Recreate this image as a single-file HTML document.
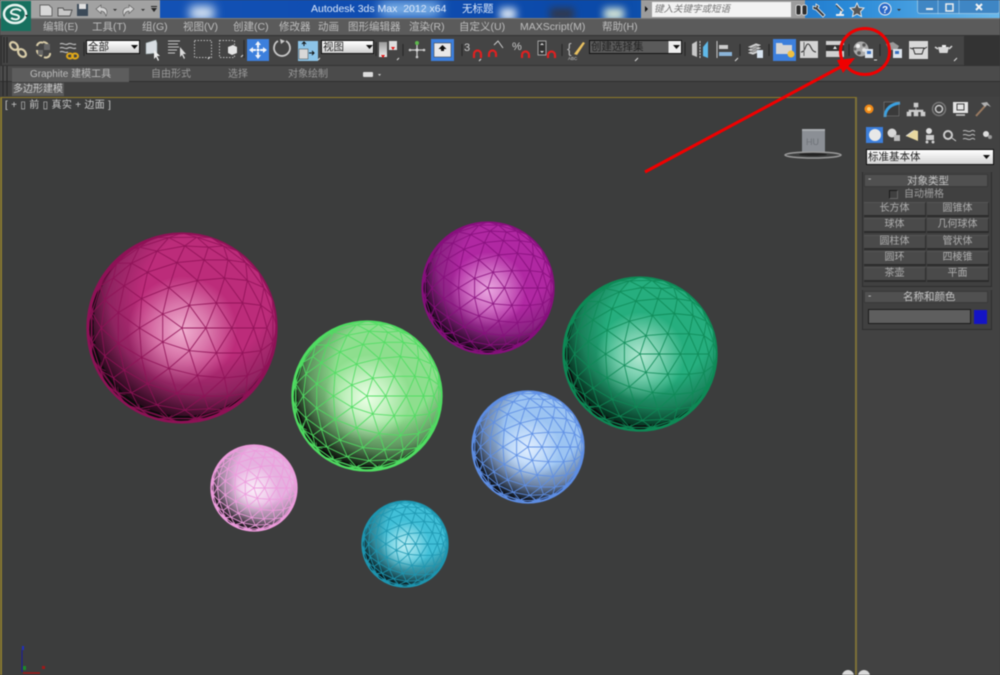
<!DOCTYPE html>
<html><head><meta charset="utf-8">
<style>
html,body{margin:0;padding:0;background:#3c3c3c}
#p{position:relative;width:1000px;height:675px;overflow:hidden;background:#3b3c3c;font-family:"Liberation Sans","Noto Sans CJK SC",sans-serif;filter:blur(.5px)}
#p div,#p span.t{position:absolute;box-sizing:border-box}
.t{position:absolute;white-space:nowrap;font-size:10px;line-height:12px;color:#c4c4c4}
.m{top:21px;font-size:10.5px;color:#bdbdbd}
.b{background:#4a4a4a;border-top:1px solid #555;border-bottom:2px solid #2c2c2c;border-right:1px solid #2f2f2f;color:#b0b0b0;font-size:10px;line-height:11px;text-align:center;height:15px}
svg{position:absolute;left:0;top:0}
</style></head><body>
<div id="p">
<!-- title bar -->
<div style="left:0;top:0;width:1000px;height:19px;background:linear-gradient(90deg,#1656b8,#0f4cb0 40%,#0b4aa8 62%,#2a8ad8 85%,#6ab8ea)"></div>
<div style="left:190px;top:6px;width:24px;height:14px;background:#dce8f4;filter:blur(5px)"></div>
<div style="left:380px;top:2px;width:60px;height:14px;background:#8cc0f0;filter:blur(6px)"></div>
<div style="left:500px;top:8px;width:16px;height:12px;background:#dce8f4;filter:blur(4px)"></div>
<div style="left:550px;top:8px;width:24px;height:12px;background:#30384c;filter:blur(4px)"></div>
<div style="left:604px;top:8px;width:20px;height:12px;background:#d8e8d8;filter:blur(4px)"></div>
<div style="left:0;top:0;width:160px;height:19px;background:#a2a2a2"></div>
<div style="left:641px;top:0;width:164px;height:19px;background:#9c9c9c"></div>
<div style="left:652px;top:2px;width:139px;height:15px;background:#f2f2f2"></div>
<div style="left:917px;top:0;width:83px;height:14px;background:#3f86c4;border:1px solid #8cc0e4;border-top:none;border-radius:0 0 3px 3px"></div>
<div style="left:0;top:18px;width:1000px;height:1px;background:#7b7b7b"></div>
<span class="t" style="left:311px;top:3px;font-size:10.500px;color:#dce8fa">Autodesk 3ds Max&nbsp; 2012 x64</span>
<span class="t" style="left:462px;top:3px;font-size:10.500px;color:#dce8fa">无标题</span>
<span class="t" style="left:654px;top:4px;font-size:9.500px;color:#777;font-style:italic">键入关键字或短语</span>
<!-- menu -->
<div style="left:0;top:19px;width:1000px;height:16px;background:#5b5b5b"></div>
<span class="t m" style="left:43px">编辑(E)</span><span class="t m" style="left:92px">工具(T)</span><span class="t m" style="left:142px">组(G)</span><span class="t m" style="left:183px">视图(V)</span><span class="t m" style="left:233px">创建(C)</span><span class="t m" style="left:279px">修改器</span><span class="t m" style="left:318px">动画</span><span class="t m" style="left:348px">图形编辑器</span><span class="t m" style="left:409px">渲染(R)</span><span class="t m" style="left:459px">自定义(U)</span><span class="t m" style="left:520px">MAXScript(M)</span><span class="t m" style="left:602px">帮助(H)</span>
<!-- toolbar -->
<div style="left:0;top:35px;width:1000px;height:31px;background:#333"></div>
<div style="left:2px;top:36px;width:962px;height:29px;background:#444"></div>
<!-- ribbon -->
<div style="left:0;top:66px;width:1000px;height:16px;background:#4b4b4b;border-bottom:1px solid #2e2e2e"></div>
<div style="left:12px;top:68px;width:117px;height:15px;background:#5d5d5d"></div>
<span class="t" style="left:30px;top:69px;font-size:10px;color:#bbb">Graphite 建模工具</span>
<span class="t" style="left:151px;top:69px;font-size:10px;color:#9a9a9a">自由形式</span>
<span class="t" style="left:228px;top:69px;font-size:10px;color:#9a9a9a">选择</span>
<span class="t" style="left:288px;top:69px;font-size:10px;color:#9a9a9a">对象绘制</span>
<div style="left:0;top:82px;width:1000px;height:15px;background:#3f3f3f"></div>
<div style="left:12px;top:83px;width:52px;height:13px;background:#5a5a5a"></div>
<span class="t" style="left:13px;top:84px;font-size:10px;color:#ccc">多边形建模</span>
<!-- viewport -->
<div style="left:0;top:97px;width:857px;height:578px;background:#3c3d3d;border-top:1px solid #8f7a2a;border-left:2px solid #8a7a30;border-right:2px solid #7d7038"></div>
<span class="t" style="left:5px;top:100px;font-size:10px;color:#c8c8c8;letter-spacing:.3px">[ + ▯ 前 ▯ 真实 + 边面 ]</span>
<!-- right panel -->
<div style="left:857px;top:97px;width:143px;height:578px;background:#424242"></div>
<div style="left:866px;top:149px;width:128px;height:16px;background:linear-gradient(#fff,#d4d4d4);border:1px solid #111"></div>
<span class="t" style="left:868px;top:151px;font-size:10.500px;color:#222">标准基本体</span>
<div style="left:862px;top:172px;width:130px;height:115px;background:#404040;border:1px solid #2e2e2e;border-top:none"></div>
<div style="left:864px;top:174px;width:124px;height:13px;background:#505050;border:1px solid #3a3a3a"></div>
<span class="t" style="left:907px;top:175px;font-size:10.500px;color:#c4c4c4">对象类型</span>
<span class="t" style="left:868px;top:174px;color:#ccc">-</span>
<div style="left:889px;top:190px;width:9px;height:9px;border:1px solid #1a1a1a;border-right-color:#666;border-bottom-color:#666"></div>
<span class="t" style="left:904px;top:189px;font-size:10px;color:#9f9f9f">自动栅格</span>
<div class="b" style="left:864px;top:202px;width:62px">长方体</div><div class="b" style="left:927px;top:202px;width:62px">圆锥体</div>
<div class="b" style="left:864px;top:218px;width:62px">球体</div><div class="b" style="left:927px;top:218px;width:62px">几何球体</div>
<div class="b" style="left:864px;top:235px;width:62px">圆柱体</div><div class="b" style="left:927px;top:235px;width:62px">管状体</div>
<div class="b" style="left:864px;top:251px;width:62px">圆环</div><div class="b" style="left:927px;top:251px;width:62px">四棱锥</div>
<div class="b" style="left:864px;top:267px;width:62px">茶壶</div><div class="b" style="left:927px;top:267px;width:62px">平面</div>
<div style="left:862px;top:290px;width:130px;height:40px;background:#404040;border:1px solid #2e2e2e;border-top:none"></div>
<div style="left:864px;top:291px;width:124px;height:12px;background:#505050;border:1px solid #3a3a3a"></div>
<span class="t" style="left:903px;top:291px;font-size:10.500px;color:#c4c4c4">名称和颜色</span>
<span class="t" style="left:868px;top:291px;color:#ccc">-</span>
<div style="left:868px;top:309px;width:103px;height:15px;background:#5e5e5e;border:1px solid #1c1c1c"></div>
<div style="left:974px;top:310px;width:13px;height:14px;background:#1414c4"></div>
<!-- dropdowns -->
<div style="left:86px;top:40px;width:54px;height:14px;background:linear-gradient(#fff,#d0d0d0);border:1px solid #111"></div>
<span class="t" style="left:88px;top:41px;font-size:10.500px;color:#222">全部</span>
<div style="left:321px;top:40px;width:53px;height:14px;background:linear-gradient(#fff,#d0d0d0);border:1px solid #111"></div>
<span class="t" style="left:323px;top:41px;font-size:10.500px;color:#222">视图</span>
<div style="left:589px;top:40px;width:93px;height:14px;background:linear-gradient(90deg,#5a5a5a 86%,#eee 86%);border:1px solid #111"></div>
<span class="t" style="left:591px;top:41px;font-size:10.500px;color:#222">创建选择集</span>

<svg width="1000" height="675" viewBox="0 0 1000 675" fill="none">
<defs><linearGradient id="gg" x1="0" y1="0" x2="0" y2="1"><stop offset="0" stop-color="#999"/><stop offset="1" stop-color="#eee"/></linearGradient></defs>
<!-- app logo -->
<rect x="1" y="1" width="30" height="30" fill="#17705f"/>
<ellipse cx="15" cy="14" rx="11" ry="9" fill="none" stroke="#e8f4f0" stroke-width="2.500"/>
<path d="M21 11c-4-3-9-2-10 1s8 2 8 5-5 3-8 1" stroke="#e8f4f0" stroke-width="2"/>
<path d="M25 15l3 0-1.500 2z" fill="#111"/>
<!-- quick access -->
<path d="M40 5h9l3 3v8H40z" fill="#d8d8d8" stroke="#666"/>
<path d="M58 8h5l1 2h8l-2 6H58z" fill="#c8c8c8" stroke="#555"/>
<rect x="77" y="4" width="11" height="12" fill="#3c4a58"/><rect x="79" y="4" width="7" height="5" fill="#e0e0e0"/>
<path d="M96 9l5-4v2.500c6 0 7 4 5 8.500-1-3-2-5-5-5v2.500z" fill="#d4d4d4" stroke="#555" stroke-width=".6"/>
<path d="M134 9l-5-4v2.500c-6 0-7 4-5 8.500 1-3 2-5 5-5v2.500z" fill="#d4d4d4" stroke="#555" stroke-width=".6"/>
<path d="M113 9h4l-2 2zM141 9h4l-2 2z" fill="#333"/><path d="M151 6h6v1h-6zM151 8h6l-3 4z" fill="#222"/>
<!-- search row -->
<path d="M645 6l3 3-3 3z" fill="#111"/>
<rect x="796" y="5" width="5" height="10" rx="2" fill="#2c2c2c" stroke="#eee" stroke-width=".8"/><rect x="802" y="5" width="5" height="10" rx="2" fill="#2c2c2c" stroke="#eee" stroke-width=".8"/>
<path d="M816 4l3 2-1 2 7 7-2 2-7-7-3-1 0-3 3 1z" fill="#3a3a3a" stroke="#eee" stroke-width=".8"/>
<path d="M836 4l7 7M836 15h8M840 15l2-6" stroke="#eee" stroke-width="2"/><path d="M836 5l6 6" stroke="#333"/>
<path d="M857 3l2 4.500 5 .5-3.500 3.500 1 5-4.500-2.500-4.500 2.500 1-5-3.500-3.500 5-.5z" fill="#555" stroke="#eee" stroke-width=".9"/>
<circle cx="885" cy="9" r="6" fill="#2a68c8" stroke="#eee"/><text x="882" y="13" font-size="10" font-weight="bold" fill="#fff" font-family="Liberation Sans">?</text>
<path d="M897 9h4l-2 2z" fill="#333"/>
<path d="M926 8h7v2h-7z" fill="#eee"/><rect x="946" y="4" width="7" height="7" stroke="#eee" stroke-width="1.500"/>
<path d="M976 4l6 6M982 4l-6 6" stroke="#f4f4f4" stroke-width="2"/>
<path d="M938 0v14M959 0v14" stroke="#a0d0f0" stroke-width=".6"/>
<!-- toolbar separators -->
<path d="M4 37v26M7 37v26M3 66v30M7 66v30M84 42v14M244 40v18M376 42v14M403 44v12M462 44v12M562 44v12M685 42v14M740 44v12M769 44v12M849 44v12M880 44v12" stroke="#262626"/>
<!-- link icons -->
<ellipse cx="14" cy="46" rx="4.500" ry="3.200" transform="rotate(45 14 46)" stroke="#d8cca8" stroke-width="2.200"/>
<ellipse cx="22" cy="53" rx="4.500" ry="3.200" transform="rotate(45 22 53)" stroke="#d8cca8" stroke-width="2.200"/>
<path d="M37 46a4 4 0 0 1 6-3M50 53a4 4 0 0 1-6 4M37 50c0 4 3 5 5 6M43 42c3 0 5 2 6 5" stroke="#d8cca8" stroke-width="2"/>
<rect x="44" y="44" width="6" height="6" fill="#666"/><rect x="38" y="50" width="5" height="5" fill="#666"/>
<path d="M60 44c3-2 5 2 8 0s5 2 8 0M60 48c3-2 5 2 8 0s5 2 8 0M60 52c3-2 5 2 8 0" stroke="#bbb" stroke-width="1.200"/>
<ellipse cx="70" cy="56" rx="3" ry="2.500" stroke="#e0a818" stroke-width="2"/><ellipse cx="75" cy="56" rx="3" ry="2.500" stroke="#e0a818" stroke-width="2"/>
<path d="M131 45h7l-3.500 4z" fill="#111"/><path d="M366 45h7l-3.500 4z" fill="#111"/><path d="M673 45h7l-3.500 4z" fill="#111"/><path d="M983 155h7l-3.500 4z" fill="#111"/>
<!-- select -->
<path d="M146 43l10-3 1 3v10l-11 1z" fill="#d8dde2" stroke="#9aa" stroke-width=".5"/>
<path d="M154 50l0 9 2-2 2 4 1-1-2-4 3 0z" fill="#eee"/>
<path d="M168 41h12M168 44h10M168 47h11M168 50h9M168 53h7" stroke="#c8c8c8" stroke-width="1"/>
<path d="M180 47l0 10 2-2 2 4 1-1-2-4 3 0z" fill="#d8d8d8"/>
<rect x="194.500" y="40.500" width="17" height="17" stroke="#bbb" stroke-dasharray="1.500 1.500"/>
<rect x="219.500" y="40.500" width="15" height="17" stroke="#bbb" stroke-dasharray="1.500 1.500"/>
<path d="M228 47l5-2 4 2v6l-5 2-4-2z" fill="#e4e4e4"/>
<!-- move -->
<rect x="247" y="39" width="22" height="22" fill="#3c7fdc"/>
<path d="M258 41l3 4h-2v3h-2v-3h-2zM258 59l3-4h-2v-3h-2v3h-2zM249 50l4-3v2h3v2h-3v2zM267 50l-4-3v2h-3v2h3v2z" fill="#f0f4fa"/><circle cx="258" cy="50" r="1.500" fill="#fff"/>
<!-- rotate -->
<path d="M278 41a8 8 0 1 0 8 0" stroke="#c8c8c8" stroke-width="1.800"/><path d="M280 39l5 2-4 3z" fill="#c8c8c8"/>
<!-- scale -->
<rect x="298" y="41" width="20" height="20" fill="#8cc4e8"/><rect x="299" y="49" width="9" height="10" fill="#d8d8d8" stroke="#444" stroke-width=".5"/>
<path d="M304 46v-4M302 44l2-2 2 2M309 53h5M312 51l2 2-2 2" stroke="#111"/>
<!-- mirror pair -->
<rect x="379" y="42" width="8" height="15" fill="url(#gg)"/><rect x="389" y="41" width="8" height="9" fill="#ddd"/>
<path d="M381 55l2 3 2-3zM391 47l2 3 2-3z" fill="#e01010"/>
<!-- crosshair -->
<path d="M417 44v14M410 50h14" stroke="#ccc" stroke-width="1.300"/><circle cx="417" cy="43" r="2" fill="#5cb84c"/><circle cx="417" cy="50" r="1.500" fill="#ddd"/><circle cx="410" cy="50" r="1.300" fill="#ccc"/><circle cx="424" cy="50" r="1.300" fill="#ccc"/><circle cx="417" cy="57" r="1.300" fill="#ccc"/>
<!-- active -->
<rect x="431" y="39" width="23" height="22" fill="#3c7fdc"/><rect x="434" y="43" width="17" height="14" fill="#e8e8e8" stroke="#333" stroke-width=".5"/><path d="M442.500 45l4 4h-2.500v2h-3v-2h-2.500z" fill="#111"/>
<!-- snaps -->
<text x="464" y="51" font-size="11" fill="#ccc" font-family="Liberation Sans">3</text>
<path d="M474 58v-4a3.500 3.500 0 0 1 7 0v4" stroke="#e02020" stroke-width="2.200"/>
<path d="M489 57v-3a3.500 3.500 0 0 1 7 0v3" stroke="#e02020" stroke-width="2.200"/><path d="M494 45l4-4 5 7" stroke="#ccc"/>
<text x="512" y="50" font-size="11" fill="#ccc" font-family="Liberation Sans">%</text>
<path d="M522 58v-3a3.500 3.500 0 0 1 7 0v3M548 58v-3a3.500 3.500 0 0 1 7 0v3" stroke="#e02020" stroke-width="2.200"/>
<rect x="538" y="41" width="8" height="14" fill="#333" stroke="#bbb" stroke-width=".8"/><path d="M542 43l2 2h-4zM542 53l2-2h-4z" fill="#ddd"/>
<text x="567" y="53" font-size="14" fill="#bbb" font-family="Liberation Sans">{</text>
<path d="M574 54l9-12 2 1-8 12z" fill="#e8c060"/><text x="568" y="60" font-size="4.500" fill="#ccc" font-family="Liberation Sans">ABC</text>
<!-- mirror -->
<path d="M692 44l5-3v16l-5-2z" fill="#c8c8c8"/><path d="M700 41v17" stroke="#ccc" stroke-dasharray="2 1"/><path d="M708 41v17l-5-2v-9z" fill="#5fb8e8"/>
<path d="M717 41v17" stroke="#ccc"/><rect x="719" y="45" width="9" height="4" fill="#ccc"/><rect x="719" y="52" width="13" height="4" fill="#8bb4d8"/>
<path d="M747 47l9-4 6 2-9 4zM747 50l9-4 6 2-9 4zM747 53l9-4 6 2-9 4z" fill="#ccc" stroke="#333" stroke-width=".5"/><rect x="757" y="50" width="6" height="8" fill="#d8e4f0"/>
<!-- folder active -->
<rect x="773" y="39" width="23" height="22" fill="#3c7fdc"/><path d="M776 43h6l1 2h9v9h-16z" fill="#d4d4d4"/><circle cx="791" cy="54" r="3.500" fill="#f0c040"/>
<rect x="800" y="41" width="18" height="17" fill="#d4d4d4"/><path d="M801 52c5 0 4-8 7-8s3 8 8 8" stroke="#333" fill="none"/><path d="M804 42v14" stroke="#666"/>
<rect x="826" y="41" width="18" height="16" fill="#d0d0d0"/><rect x="826" y="45" width="18" height="6" fill="#333"/><path d="M835 46l2 3h-4z" fill="#eee"/>
<!-- material -->
<circle cx="861" cy="49" r="7.500" fill="#aaa"/><circle cx="858" cy="46" r="2" fill="#eee"/><circle cx="864" cy="45" r="1.700" fill="#555"/><circle cx="859" cy="53" r="1.900" fill="#555"/><circle cx="864" cy="50" r="1.900" fill="#e4e4e4"/><circle cx="855" cy="49" r="1.500" fill="#666"/>
<rect x="865" y="49" width="8" height="9" fill="#dde4ec"/><rect x="867" y="51" width="4" height="3" fill="#3a70c0"/>
<path d="M886 44l7-2 6 4-2 4h-8z" fill="#999"/><rect x="893" y="49" width="9" height="9" fill="#dde4ec"/><rect x="895" y="51" width="4" height="3" fill="#3a70c0"/>
<rect x="909" y="41" width="19" height="18" fill="#d8d8d8"/><path d="M913 48h11l-2 6h-7z" stroke="#333" fill="none"/><path d="M913 49l-3-1M924 49l3-2" stroke="#333"/>
<path d="M938 47h11l-1.500 6h-8z" fill="#d8d8d8"/><path d="M938 49l-3-2M949 49l3-3" stroke="#d8d8d8" stroke-width="1.500"/><path d="M942 46h4" stroke="#eee" stroke-width="2"/>
<path d="M635 61l3-3M735 61l3-3M877 60l-3 0M954 61l3-3M208 59l2-2M241 57l2-2M318 60l2-2M397 60l2-2M479 61l2-2" stroke="#ddd"/>
<!-- ribbon small -->
<rect x="363" y="72" width="10" height="5" rx="1" fill="#ddd"/><path d="M378 74h3l-1.500 2z" fill="#ccc"/>
<!-- cmd panel tabs -->
<circle cx="869" cy="109" r="4.500" fill="#f08818"/><circle cx="869" cy="109" r="2" fill="#ffd070"/>
<rect x="884" y="102" width="16" height="15" fill="#3a3a3a"/><path d="M885 117c0-8 6-13 15-14" stroke="#3aa0e0" stroke-width="3"/><rect x="884" y="102" width="15" height="14" stroke="#888" stroke-width=".5"/>
<path d="M914 103h4v4h-4zM907 112h4v4h-4zM914 112h4v4h-4zM921 112h4v4h-4zM916 107v3M909 112v-2h14v2" fill="#ccc" stroke="#ccc" stroke-width=".6"/>
<circle cx="939" cy="109" r="6.500" stroke="#777" stroke-width="1.500"/><circle cx="939" cy="109" r="3.500" stroke="#ccc" stroke-width="1.500"/>
<rect x="953" y="102" width="15" height="11" fill="#e4e4e4"/><rect x="957" y="104" width="7" height="6" stroke="#444"/><path d="M956 115h9" stroke="#ccc" stroke-width="1.500"/>
<path d="M976 116l10-11" stroke="#9a7a60" stroke-width="2"/><path d="M981 103l6-1 4 5-4-2-2 2z" fill="#b0b0b0"/>
<!-- second row -->
<rect x="866" y="127" width="17" height="16" fill="#3c7fdc"/><circle cx="875" cy="135" r="6" fill="#e8e8e8"/>
<circle cx="892" cy="133" r="4.500" fill="#d8d8d8"/><rect x="894" y="135" width="6" height="6" fill="#bbb"/>
<path d="M906 136l8-6 4 1 0 10z" fill="#e8d8a0"/><path d="M906 136l7-5" stroke="#ddd"/>
<circle cx="929" cy="131" r="3" fill="#ddd"/><rect x="926" y="135" width="8" height="5" fill="#ccc"/><circle cx="927" cy="142" r="1.500" fill="#ccc"/><circle cx="933" cy="142" r="1.500" fill="#ccc"/>
<circle cx="948" cy="135" r="4" stroke="#ccc" stroke-width="2"/><path d="M952 138l4 3" stroke="#ccc"/>
<path d="M963 131c3-2 5 2 8 0s3 1 4 0M963 135c3-2 5 2 8 0s3 1 4 0M963 139c3-2 5 2 8 0s3 1 4 0" stroke="#bbb"/>
<circle cx="986" cy="134" r="3" fill="#ddd"/><circle cx="990" cy="137" r="2" fill="#999"/>
<!-- viewcube -->
<rect x="802" y="129" width="23" height="23" fill="#8b8f95"/><rect x="802" y="129" width="23" height="2" fill="#a8acb0"/>
<text x="806" y="145" font-size="9" fill="#6e7278" font-family="Liberation Sans">HU</text>
<ellipse cx="813" cy="155" rx="28" ry="3" stroke="#9a9a9a" stroke-width="1.500"/><ellipse cx="813" cy="154.500" rx="14" ry="1.500" fill="#222"/>
<!-- axes -->
<path d="M22 650v22" stroke="#1a1a9a"/><path d="M23 673h17" stroke="#a01818" stroke-width="1.500"/>
<rect x="22" y="646" width="2" height="4" fill="#2030c0"/><rect x="23" y="666" width="3" height="4" fill="#1a8a2a"/><rect x="42" y="666" width="3" height="3" fill="#a01818"/>
<!-- wheels -->
<circle cx="848" cy="676" r="6" fill="#d8d8d8"/><circle cx="864" cy="676" r="6" fill="#d8d8d8"/>
<g id="spheres"></g>
<!-- annotation -->
<path d="M645 172L846 64" stroke="#f00000" stroke-width="3"/>
<path d="M855 58L837 60L843 73z" fill="#f00000"/>
<ellipse cx="865" cy="51.500" rx="24.500" ry="23" stroke="#f00000" stroke-width="3"/>
</svg>
</div>
<script>
(function(){
/* cx,cy,r, base, wire, highlight, mid-shade, dark-shade, wire opacity */
var S=[[182,328,95,'#bc2c7a','#8e1256','#f0b0d0','#8e2460','#2c0a1e',.9],
[488,288,66,'#b028a2','#86107c','#eaa8e0','#8a2482','#2c0a2a',.9],
[640,354,77,'#26ae7e','#0e8a56','#b4e8d2','#1a805a','#06301f',.9],
[367,396,75,'#8ede8e','#50dc62','#ecffe6','#5f945f','#141f14',.95],
[528,447,56,'#9cc4f2','#5e8ee4','#e0eeff','#6e84a6','#141c28',.95],
[254,488,43,'#e6b2e0','#ec9cdc','#fbeef9','#a088a0','#221a22',.95],
[405,544,43,'#42c0d8','#1e96b0','#bceef4','#348696','#0a2a30',.9]];
var sq5=Math.sqrt(5),V=[[0,0,1],[0,0,-1]],k;
for(k=0;k<5;k++){var a=k*72*Math.PI/180;V.push([2/sq5*Math.cos(a),2/sq5*Math.sin(a),1/sq5]);}
for(k=0;k<5;k++){var b=(k*72+36)*Math.PI/180;V.push([2/sq5*Math.cos(b),2/sq5*Math.sin(b),-1/sq5]);}
var F=[];
for(k=0;k<5;k++){var u=2+k,u2=2+(k+1)%5,l=7+k,l2=7+(k+4)%5;
F.push([0,u,u2]);F.push([u,u2,l]);F.push([u,l,l2]);F.push([1,l,7+(k+1)%5]);}
var n=4;
function P(f,i,j){var A=V[f[0]],B=V[f[1]],C=V[f[2]],c=n-i-j,x=A[0]*c+B[0]*i+C[0]*j,y=A[1]*c+B[1]*i+C[1]*j,z=A[2]*c+B[2]*i+C[2]*j,m=Math.sqrt(x*x+y*y+z*z);return [x/m,y/m,z/m];}
var E=[];
F.forEach(function(f){for(var i=0;i<=n;i++)for(var j=0;j<=n-i;j++){
 if(i+j<n){var p=P(f,i,j),q=P(f,i+1,j),w=P(f,i,j+1);E.push([p,q]);E.push([p,w]);E.push([q,w]);}
}});
var FR=E.filter(function(e){return e[0][2]>-0.02&&e[1][2]>-0.02});
var BK=E.filter(function(e){return e[0][2]<0.02&&e[1][2]<0.02});
function path(L,cx,cy,r){var d='';L.forEach(function(e){d+='M'+(cx+e[0][0]*r).toFixed(1)+' '+(cy+e[0][1]*r).toFixed(1)+'L'+(cx+e[1][0]*r).toFixed(1)+' '+(cy+e[1][1]*r).toFixed(1);});return d;}
var out='';
S.forEach(function(s,i){
 var cx=s[0],cy=s[1],r=s[2],base=s[3],wire=s[4],hi=s[5],mid=s[6],dk=s[7],op=s[8];
 out+='<defs><radialGradient id="a'+i+'" cx=".62" cy=".34" r=".76"><stop offset="0" stop-color="'+base+'"/><stop offset=".46" stop-color="'+base+'"/><stop offset=".7" stop-color="'+mid+'"/><stop offset=".9" stop-color="'+dk+'"/><stop offset="1" stop-color="#0a0a0a"/></radialGradient>'+
 '<radialGradient id="b'+i+'" cx=".49" cy=".53" r=".3"><stop offset="0" stop-color="'+hi+'"/><stop offset=".5" stop-color="'+hi+'" stop-opacity=".55"/><stop offset="1" stop-color="'+hi+'" stop-opacity="0"/></radialGradient></defs>';
 out+='<circle cx="'+cx+'" cy="'+cy+'" r="'+r+'" fill="'+wire+'"/>';
 out+='<circle cx="'+(cx-.01*r)+'" cy="'+(cy+.012*r)+'" r="'+(r*.965)+'" fill="#0b0a0b"/>';
 out+='<path d="'+path(BK,cx,cy,r)+'" stroke="'+wire+'" stroke-width=".8" opacity=".8"/>';
 var sx=cx+.025*r,sy=cy-.03*r,sr=r*.958;
 out+='<circle cx="'+sx+'" cy="'+sy+'" r="'+sr+'" fill="url(#a'+i+')"/><circle cx="'+sx+'" cy="'+sy+'" r="'+sr+'" fill="url(#b'+i+')"/>';
 out+='<path d="'+path(FR,cx,cy,r)+'" stroke="'+wire+'" stroke-width=".9" opacity="'+op+'"/>';
 out+='<circle cx="'+cx+'" cy="'+cy+'" r="'+r+'" stroke="'+wire+'" stroke-width="1.300"/>';
});
document.getElementById('spheres').innerHTML=out;
})();
</script>
</body></html>
